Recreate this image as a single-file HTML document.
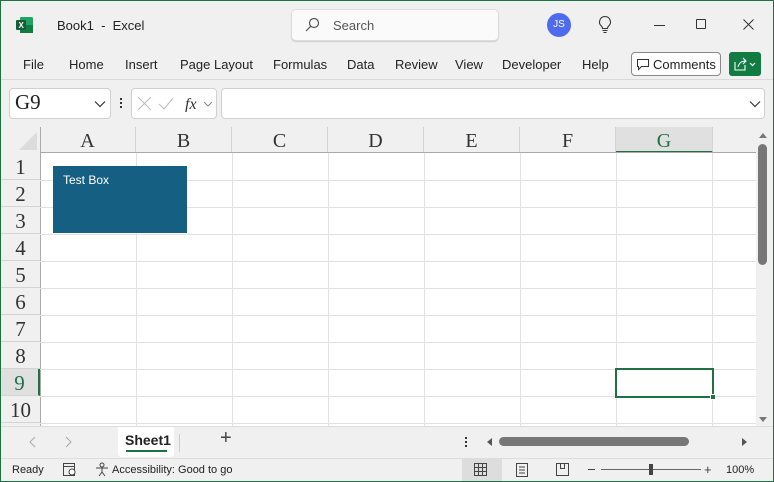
<!DOCTYPE html>
<html><head><meta charset="utf-8"><style>
*{margin:0;padding:0;box-sizing:border-box}
body{width:774px;height:482px;overflow:hidden;background:#f0f0f0;font-family:"Liberation Sans",sans-serif;position:relative;color:#222}
.a{position:absolute}
.t{font-size:13px;white-space:nowrap}
.col{position:absolute;top:127px;height:26px;border-right:1px solid #d4d4d4;font-family:"Liberation Serif",serif;font-size:20px;text-align:center;line-height:28px;color:#333}
.row{position:absolute;left:1px;width:39px;height:27px;border-bottom:1px solid #d4d4d4;font-family:"Liberation Serif",serif;font-size:21px;text-align:center;line-height:28px;color:#333}
.vl{position:absolute;top:153px;width:1px;height:273px;background:#e1e1e1}
.hl{position:absolute;left:40px;width:716px;height:1px;background:#e1e1e1}
</style></head><body>
<div class="a" style="left:0;top:0;width:774px;height:482px;border:1px solid #1e7145;z-index:50;pointer-events:none"></div>
<!-- title bar -->
<svg class="a" style="left:16px;top:16px" width="18" height="18"><rect x="4" y="1" width="13" height="16" rx="1.5" fill="#21a366"/><rect x="4" y="9" width="13" height="8" fill="#107c41"/><rect x="0" y="4" width="10" height="10" rx="1" fill="#185c37"/><text x="2.5" y="12" font-size="8" fill="#fff" font-family="Liberation Sans" font-weight="bold">X</text></svg>
<div class="a t" style="left:57px;top:18px">Book1&nbsp; -&nbsp; Excel</div>
<div class="a" style="left:291px;top:9px;width:208px;height:32px;background:#fafafa;border:1px solid #ddd;border-radius:5px;box-shadow:0 1px 1px #ccc"></div>
<svg class="a" style="left:304px;top:17px" width="16" height="16"><circle cx="10" cy="6" r="4.5" fill="none" stroke="#555" stroke-width="1.2"/><line x1="6.8" y1="9.2" x2="2" y2="14" stroke="#555" stroke-width="1.2"/></svg>
<div class="a t" style="left:333px;top:18px;color:#555">Search</div>
<div class="a" style="left:547px;top:13px;width:24px;height:24px;border-radius:12px;background:#4f6bed;color:#fff;font-size:10px;text-align:center;line-height:24px">JS</div>
<svg class="a" style="left:597px;top:15px" width="16" height="20"><path d="M8 1.5a5.5 5.5 0 0 0-3.5 9.7c.8.8 1 1.5 1 2.3h5c0-.8.2-1.5 1-2.3A5.5 5.5 0 0 0 8 1.5z" fill="none" stroke="#333" stroke-width="1.1"/><line x1="5.5" y1="15.5" x2="10.5" y2="15.5" stroke="#333"/><line x1="6.5" y1="17.5" x2="9.5" y2="17.5" stroke="#333"/></svg>
<div class="a" style="left:654px;top:25px;width:11px;height:1px;background:#333"></div>
<div class="a" style="left:696px;top:19px;width:10px;height:10px;border:1px solid #333;border-radius:1px"></div>
<svg class="a" style="left:743px;top:19px" width="11" height="11"><path d="M0.5 0.5L10.5 10.5M10.5 0.5L0.5 10.5" stroke="#333"/></svg>
<!-- tabs -->
<div class="a t" style="left:23px;top:57px">File</div>
<div class="a t" style="left:69px;top:57px">Home</div>
<div class="a t" style="left:125px;top:57px">Insert</div>
<div class="a t" style="left:180px;top:57px">Page Layout</div>
<div class="a t" style="left:273px;top:57px">Formulas</div>
<div class="a t" style="left:347px;top:57px">Data</div>
<div class="a t" style="left:395px;top:57px">Review</div>
<div class="a t" style="left:455px;top:57px">View</div>
<div class="a t" style="left:502px;top:57px">Developer</div>
<div class="a t" style="left:582px;top:57px">Help</div>
<div class="a" style="left:631px;top:52px;width:90px;height:24px;background:#fff;border:1px solid #888;border-radius:4px"></div>
<svg class="a" style="left:636px;top:58px" width="14" height="13"><path d="M1.5 1.5h11v7h-7l-3 3v-3h-1z" fill="none" stroke="#333"/></svg>
<div class="a t" style="left:653px;top:57px">Comments</div>
<div class="a" style="left:729px;top:52px;width:32px;height:24px;background:#107c41;border-radius:3px"></div>
<svg class="a" style="left:733px;top:56px" width="26" height="16"><path d="M2 6v8h10V9" fill="none" stroke="#fff" stroke-width="1.1"/><path d="M5 11c1-4 4-6 8-6M10 2l3 3-3 3" fill="none" stroke="#fff" stroke-width="1.1"/><path d="M17 7l2.5 2.5L22 7" fill="none" stroke="#fff" stroke-width="1.2"/></svg>
<div class="a" style="left:0;top:79px;width:774px;height:1px;background:#dadada"></div>
<!-- formula bar -->
<div class="a" style="left:9px;top:88px;width:102px;height:31px;background:#fff;border:1px solid #d0d0d0;border-radius:4px"></div>
<div class="a" style="left:15px;top:90px;font-family:'Liberation Serif',serif;font-size:21px">G9</div>
<svg class="a" style="left:94px;top:100px" width="12" height="8"><path d="M1 1.5l5 5 5-5" fill="none" stroke="#333" stroke-width="1.2"/></svg>
<div class="a" style="left:120px;top:98px;width:2px;height:2px;background:#333;box-shadow:0 4px #333,0 8px #333"></div>
<div class="a" style="left:131px;top:88px;width:86px;height:31px;background:#fff;border:1px solid #d0d0d0;border-radius:4px"></div>
<svg class="a" style="left:137px;top:96px" width="80" height="16"><path d="M1 1l13 13M14 1L1 14" stroke="#bbb"/><path d="M22 8l5 5 9-11" fill="none" stroke="#bbb"/><text x="48" y="13" font-family="Liberation Serif" font-style="italic" font-size="16" fill="#333">fx</text><path d="M67 6l4 4 4-4" fill="none" stroke="#888"/></svg>
<div class="a" style="left:221px;top:88px;width:544px;height:31px;background:#fff;border:1px solid #d0d0d0;border-radius:4px"></div>
<svg class="a" style="left:749px;top:100px" width="12" height="8"><path d="M1 1.5l5 5 5-5" fill="none" stroke="#333" stroke-width="1.2"/></svg>
<!-- grid -->
<div class="a" style="left:40px;top:153px;width:716px;height:273px;background:#fff"></div>
<svg class="a" style="left:18px;top:131px" width="20" height="20"><path d="M19 1v18H1z" fill="#dcdcdc"/></svg>
<div class="col" style="left:40px;width:96px">A</div>
<div class="col" style="left:136px;width:96px">B</div>
<div class="col" style="left:232px;width:96px">C</div>
<div class="col" style="left:328px;width:96px">D</div>
<div class="col" style="left:424px;width:96px">E</div>
<div class="col" style="left:520px;width:96px">F</div>
<div class="col" style="left:616px;width:97px;background:#e0e0e0;border-bottom:2px solid #1e7145;color:#1e7145">G</div>
<div class="a" style="left:40px;top:152px;width:716px;height:1px;background:#aaa"></div>
<div class="a" style="left:40px;top:127px;width:1px;height:299px;background:#aaa"></div>
<div class="vl" style="left:136px"></div><div class="vl" style="left:232px"></div><div class="vl" style="left:328px"></div><div class="vl" style="left:424px"></div><div class="vl" style="left:520px"></div><div class="vl" style="left:616px"></div><div class="vl" style="left:712px"></div>
<div class="hl" style="top:180px"></div><div class="hl" style="top:207px"></div><div class="hl" style="top:234px"></div><div class="hl" style="top:261px"></div><div class="hl" style="top:288px"></div><div class="hl" style="top:315px"></div><div class="hl" style="top:342px"></div><div class="hl" style="top:369px"></div><div class="hl" style="top:396px"></div><div class="hl" style="top:423px"></div>
<div class="row" style="top:153px">1</div><div class="row" style="top:180px">2</div><div class="row" style="top:207px">3</div><div class="row" style="top:234px">4</div><div class="row" style="top:261px">5</div><div class="row" style="top:288px">6</div><div class="row" style="top:315px">7</div><div class="row" style="top:342px">8</div>
<div class="row" style="top:369px;background:#e0e0e0;color:#1e7145;border-right:2px solid #1e7145">9</div>
<div class="row" style="top:396px">10</div>
<div class="a" style="left:53px;top:166px;width:134px;height:67px;background:#156082;color:#fff;font-size:12px;padding:7px 10px">Test Box</div>
<div class="a" style="left:615px;top:368px;width:99px;height:30px;border:2px solid #1e7145"></div>
<div class="a" style="left:710px;top:394px;width:6px;height:6px;background:#1e7145;border:1px solid #fff"></div>
<!-- vscroll -->
<svg class="a" style="left:757px;top:130px" width="12" height="10"><path d="M2 8h8L6 3z" fill="#777"/></svg>
<div class="a" style="left:758px;top:144px;width:9px;height:121px;background:#777;border-radius:5px"></div>
<svg class="a" style="left:757px;top:415px" width="12" height="10"><path d="M2 2h8L6 7z" fill="#777"/></svg>
<!-- sheet tabs -->
<div class="a" style="left:0;top:426px;width:774px;height:1px;background:#ddd"></div>
<svg class="a" style="left:28px;top:436px" width="50" height="12"><path d="M7 1L2 6l5 5M38 1l5 5-5 5" fill="none" stroke="#aaa"/></svg>
<div class="a" style="left:118px;top:427px;width:56px;height:30px;background:#fff;border-radius:0 0 4px 4px"></div>
<div class="a" style="left:125px;top:432px;font-size:14px;font-weight:bold;color:#222">Sheet1</div>
<div class="a" style="left:126px;top:450px;width:41px;height:2px;background:#1e7145"></div>
<div class="a" style="left:179px;top:434px;width:1px;height:18px;background:#ccc"></div>
<div class="a" style="left:220px;top:427px;font-size:20px;color:#444">+</div>
<div class="a" style="left:465px;top:437px;width:2px;height:2px;background:#333;box-shadow:0 4px #333,0 8px #333"></div>
<svg class="a" style="left:485px;top:436px" width="270" height="12"><path d="M7 2v8L2 6z" fill="#555"/><rect x="14" y="1" width="190" height="9" rx="4.5" fill="#777"/><path d="M257 2v8l5-4z" fill="#555"/></svg>
<!-- status bar -->
<div class="a" style="left:0;top:458px;width:774px;height:1px;background:#ddd"></div>
<div class="a" style="left:12px;top:464px;font-size:11px">Ready</div>
<svg class="a" style="left:62px;top:462px" width="16" height="15"><rect x="1.5" y="1.5" width="11" height="12" fill="none" stroke="#444"/><line x1="1.5" y1="4.5" x2="12.5" y2="4.5" stroke="#444"/><circle cx="10" cy="10" r="3" fill="#fff" stroke="#444"/></svg>
<svg class="a" style="left:95px;top:462px" width="16" height="15"><circle cx="7" cy="3" r="2" fill="none" stroke="#444"/><path d="M1 6h12M7 6v4l-3 4M7 10l3 4" fill="none" stroke="#444"/></svg>
<div class="a" style="left:112px;top:464px;font-size:11px">Accessibility: Good to go</div>
<div class="a" style="left:462px;top:459px;width:40px;height:22px;background:#ddd"></div>
<svg class="a" style="left:474px;top:463px" width="100" height="14"><path d="M0.5 0.5h12v12h-12zM4.5 0.5v12M8.5 0.5v12M0.5 4.5h12M0.5 8.5h12" fill="none" stroke="#444"/><path d="M42.5 0.5h11v13h-11zM45 4h6M45 7h6M45 10h6" fill="none" stroke="#444"/><path d="M82.5 0.5h12v12h-12zM86.5 0.5v5h4v-5" fill="none" stroke="#444"/></svg>
<div class="a" style="left:588px;top:469px;width:7px;height:1px;background:#444"></div>
<div class="a" style="left:601px;top:469px;width:100px;height:1px;background:#666"></div>
<div class="a" style="left:649px;top:464px;width:4px;height:11px;background:#444"></div>
<div class="a" style="left:704px;top:462px;font-size:13px;color:#444">+</div>
<div class="a" style="left:726px;top:464px;font-size:11px">100%</div>
</body></html>
